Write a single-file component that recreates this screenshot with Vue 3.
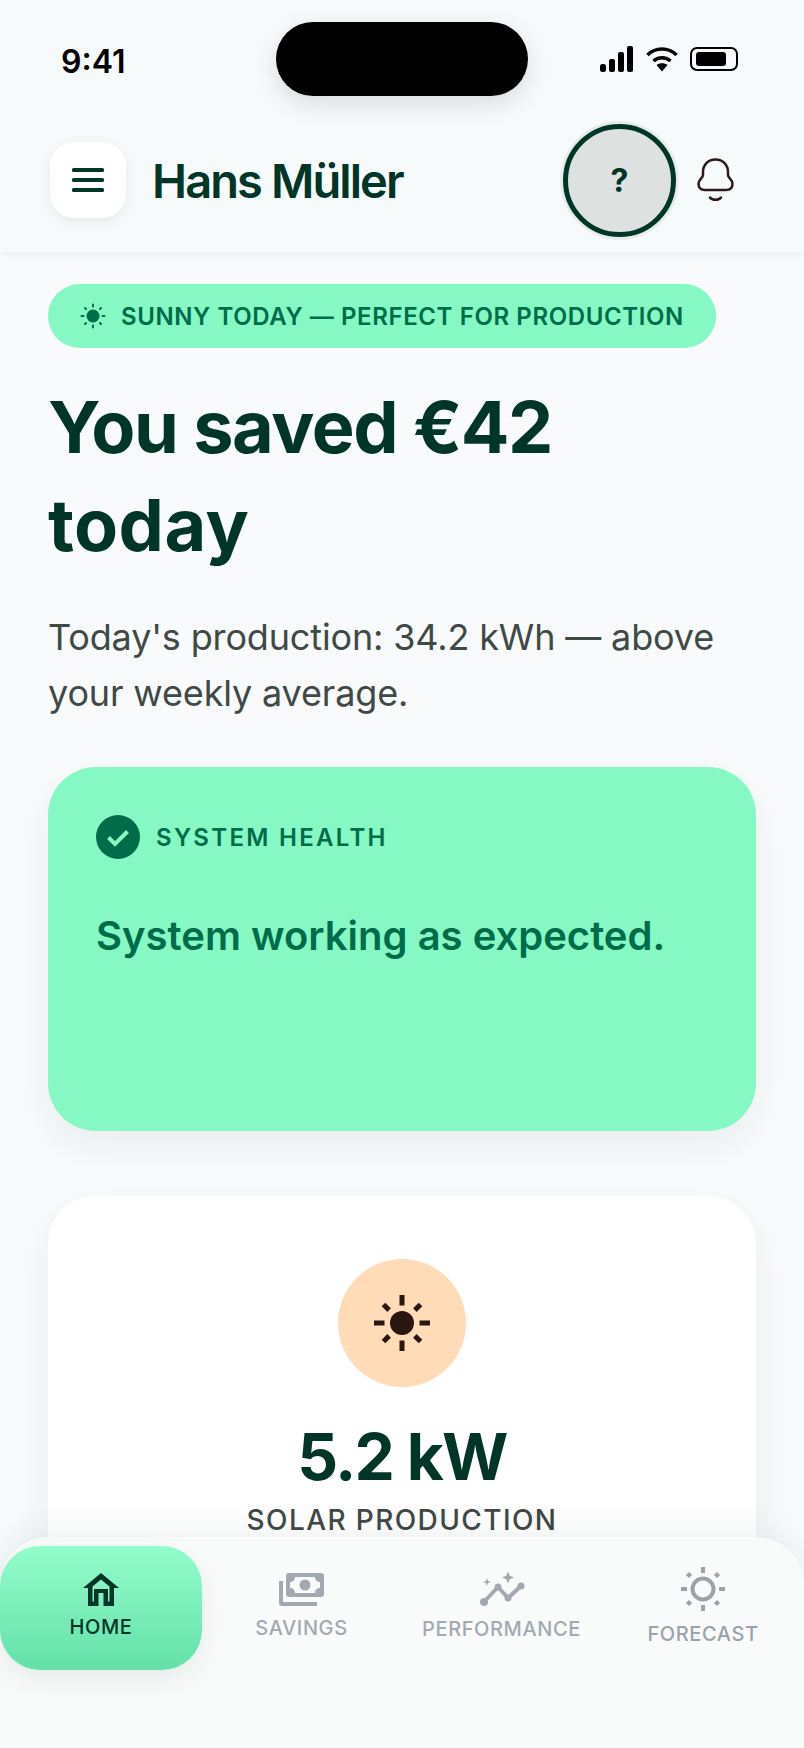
<script setup>
const navItems = [
  { key: 'home', label: 'HOME', active: true },
  { key: 'savings', label: 'SAVINGS' },
  { key: 'performance', label: 'PERFORMANCE' },
  { key: 'forecast', label: 'FORECAST' }
]
</script>

<template>
  <div class="phone">
    <div class="island"></div>

    <header class="topbar">
      <div class="status">
        <span class="time">9:41</span>
        <div class="status-icons">
          <svg width="34" height="26" viewBox="0 0 34 26" fill="#000">
            <rect x="0" y="18" width="6" height="8" rx="2.500" />
            <rect x="9" y="13" width="6" height="13" rx="2" />
            <rect x="18" y="6" width="6" height="20" rx="2" />
            <rect x="27" y="0" width="6" height="26" rx="2" />
          </svg>
          <svg width="32" height="26" viewBox="0 0 32 26" fill="none" stroke="#000" stroke-width="3.500">
            <path d="M1.500 9 C9.500 1 22.500 1 30.500 9" />
            <path d="M7.500 15 C12 10.500 20 10.500 24.500 15" />
            <path d="M10.500 19 L16 25.500 L21.500 19 C18.500 16.500 13.500 16.500 10.500 19Z" fill="#000" stroke="none" />
          </svg>
          <svg width="48" height="24" viewBox="0 0 48 24">
            <rect x="1" y="1" width="46" height="22" rx="6" fill="none" stroke="#000" stroke-width="2" />
            <rect x="6" y="5" width="30" height="14" rx="3" fill="#000" />
          </svg>
        </div>
      </div>

      <div class="appbar">
        <button class="menu-btn">
          <svg width="32" height="24" viewBox="0 0 32 24" fill="#003527">
            <rect x="0" y="0" width="32" height="4" rx="1.500" />
            <rect x="0" y="10" width="32" height="4" rx="1.500" />
            <rect x="0" y="20" width="32" height="4" rx="1.500" />
          </svg>
        </button>
        <div class="name">Hans Müller</div>
        <div class="avatar"><span>?</span></div>
        <svg class="bell" width="38" height="44" viewBox="0 0 38 44" fill="none" stroke="#2a1a1a" stroke-width="2.500">
          <path d="M18.500 1.500 C11 1.500 6 7 6 14 L6 17 C6 20 1.500 21 1.500 26 C1.500 30 4 32 8 32 L29 32 C33 32 35.500 30 35.500 26 C35.500 21 31 20 31 17 L31 14 C31 7 26 1.500 18.500 1.500Z" />
          <path d="M13 39.500 C15 42.500 22 42.500 24 39.500" stroke-linecap="round" />
        </svg>
      </div>
    </header>

    <main class="content">
      <div class="chip">
        <svg width="26" height="26" viewBox="0 0 26 26" fill="#006c4a" stroke="#006c4a" stroke-width="2" stroke-linecap="round">
          <circle cx="13" cy="13" r="6.500" stroke="none" />
          <path d="M13 1.500v2M13 22.500v2M1.500 13h2M22.500 13h2M5 5l1 1M20 20l1 1M5 21l1-1M20 6l1-1" />
        </svg>
        <span>SUNNY TODAY — PERFECT FOR PRODUCTION</span>
      </div>

      <h1 class="headline">You saved €42<br /><span class="headline-second">today</span></h1>
      <p class="sub">Today's production: 34.2 kWh — above your weekly average.</p>

      <section class="health">
        <div class="health-label">
          <svg width="44" height="44" viewBox="0 0 44 44">
            <circle cx="22" cy="22" r="22" fill="#006c4a" />
            <path d="M12.500 22.500 L19 29 L31.500 16.500" fill="none" stroke="#86f8c3" stroke-width="4" />
          </svg>
          <span>SYSTEM HEALTH</span>
        </div>
        <p class="health-text">System working as expected.</p>
      </section>

      <section class="solar">
        <div class="sun-circle">
          <svg width="56" height="56" viewBox="0 0 56 56" fill="#2a1610">
            <circle cx="28" cy="28" r="12" />
            <rect x="25.500" y="0" width="5" height="10.500" />
            <rect x="25.500" y="45.500" width="5" height="10.500" />
            <rect x="0" y="25.500" width="10.500" height="5" />
            <rect x="45.500" y="25.500" width="10.500" height="5" />
            <rect x="9.800" y="8.300" width="5" height="8" transform="rotate(-45 12.300 12.300)" />
            <rect x="41.200" y="8.300" width="5" height="8" transform="rotate(45 43.700 12.300)" />
            <rect x="9.800" y="39.700" width="5" height="8" transform="rotate(45 12.300 43.700)" />
            <rect x="41.200" y="39.700" width="5" height="8" transform="rotate(-45 43.700 43.700)" />
          </svg>
        </div>
        <div class="solar-value">5.2 kW</div>
        <div class="solar-label">SOLAR PRODUCTION</div>
      </section>
    </main>

    <nav class="tabs">
      <div v-for="item in navItems" :key="item.key" :class="['tab', 'tab-' + item.key, { active: item.active }]">
        <svg v-if="item.key === 'home'" width="36" height="34" viewBox="0 0 36 34" fill="#003527">
          <path fill-rule="evenodd" d="M18 0 L36 15 L31 15 L31 33 L20.500 33 L20.500 20 L15.500 20 L15.500 33 L5 33 L5 15 L0 15 Z M18 6.500 L9.500 13.500 L9.500 28.500 L11 28.500 L11 16 L25 16 L25 28.500 L26.500 28.500 L26.500 13.500 Z" />
        </svg>
        <svg v-else-if="item.key === 'savings'" width="45" height="33" viewBox="0 0 45 33" fill="#a3a9b1">
          <path fill-rule="evenodd" d="M10 0 H42 a3 3 0 0 1 3 3 V21 a3 3 0 0 1 -3 3 H10 a3 3 0 0 1 -3 -3 V3 a3 3 0 0 1 3 -3Z M16 4 c0 3 -2 5 -5 5 V15 c3 0 5 2 5 5 H36 c0 -3 2 -5 5 -5 V9 c-3 0 -5 -2 -5 -5Z" />
          <circle cx="26" cy="12" r="5.500" />
          <path d="M0 8 H4 V29 H38 V33 H3 a3 3 0 0 1 -3 -3Z" />
        </svg>
        <svg v-else-if="item.key === 'performance'" width="46" height="36" viewBox="0 0 46 36" fill="#a3a9b1">
          <path d="M5 30 L19 15 L29 26 L42 14" fill="none" stroke="#a3a9b1" stroke-width="4" stroke-linejoin="round" />
          <circle cx="5" cy="30" r="4" />
          <circle cx="19" cy="15" r="3.500" />
          <circle cx="29" cy="26" r="3.500" />
          <circle cx="42" cy="14" r="3.500" />
          <path d="M29 -0.500 L30.800 3.700 L35 5.500 L30.800 7.300 L29 11.500 L27.200 7.300 L23 5.500 L27.200 3.700Z" />
          <path d="M8 6 L9 9 L12 10 L9 11 L8 14 L7 11 L4 10 L7 9Z" />
        </svg>
        <svg v-else width="44" height="44" viewBox="0 0 44 44" fill="none" stroke="#9aa3a9">
          <circle cx="22" cy="22" r="10.500" stroke-width="4" />
          <path d="M22 0v6M22 38v6M0 22h6M38 22h6" stroke-width="4" />
          <path d="M6.500 6.500l3 3M34.500 34.500l3 3M6.500 37.500l3-3M34.500 9.500l3-3" stroke-width="4.500" />
        </svg>
        <span class="tab-label">{{ item.label }}</span>
      </div>
    </nav>
  </div>
</template>

<style scoped>
.phone {
  position: relative;
  width: 804px;
  height: 1748px;
  overflow: hidden;
  background: #f8fafc;
  font-family: Inter, 'Liberation Sans', sans-serif;
  color: #003527;
}
.island {
  position: absolute;
  left: 276px;
  top: 22px;
  width: 252px;
  height: 74px;
  border-radius: 37px;
  background: #000;
  box-shadow: 0 8px 24px rgba(0, 0, 0, 0.12);
  z-index: 5;
}
.topbar {
  height: 252px;
  box-sizing: border-box;
  background: #f7fafb;
  box-shadow: 0 2px 8px rgba(0, 53, 39, 0.06);
}
.status {
  height: 123px;
  box-sizing: border-box;
  padding: 44px 66px 0 61px;
  display: flex;
  justify-content: space-between;
  align-items: flex-start;
}
.time {
  font-size: 32px;
  line-height: 36px;
  font-weight: 600;
  color: #000;
}
.status-icons {
  display: flex;
  align-items: center;
  gap: 12px;
  padding-top: 2px;
}
.appbar {
  height: 114px;
  display: flex;
  align-items: center;
  padding: 0 69px 0 50px;
}
.menu-btn {
  width: 76px;
  height: 76px;
  border: none;
  border-radius: 24px;
  background: #fff;
  display: flex;
  align-items: center;
  justify-content: center;
  box-shadow: 0 4px 12px rgba(0, 53, 39, 0.08);
}
.name {
  margin-left: 26px;
  font-size: 47px;
  font-weight: 600;
  letter-spacing: -1.9px;
  flex: 1;
}
.avatar {
  width: 113px;
  height: 113px;
  box-sizing: border-box;
  border-radius: 50%;
  border: 5px solid #003527;
  background: radial-gradient(circle, #dde1e0 0, #dde1e0 72%, #e6eaea 90%);
  box-shadow: 0 0 0 3px #e6ebeb;
  display: flex;
  align-items: center;
  justify-content: center;
  font-size: 32px;
  font-weight: 700;
}
.bell {
  margin-left: 21px;
}
.content {
  padding: 32px 48px 0;
}
.chip {
  width: 668px;
  height: 64px;
  box-sizing: border-box;
  border-radius: 32px;
  background: #86f8c3;
  color: #006c4a;
  display: flex;
  align-items: center;
  gap: 15px;
  padding-left: 32px;
  font-size: 24px;
  font-weight: 600;
  letter-spacing: 0.6px;
}
.headline {
  margin: 30px 0 0;
  font-size: 72px;
  line-height: 98px;
  font-weight: 700;
  letter-spacing: -1.4px;
}
.headline-second {
  letter-spacing: 0.4px;
}
.sub {
  margin: 35px 0 0;
  font-size: 36px;
  line-height: 56px;
  letter-spacing: -0.15px;
  color: #3f4945;
}
.health {
  margin-top: 46px;
  height: 364px;
  box-sizing: border-box;
  padding: 48px;
  border-radius: 48px;
  background: #86f8c3;
  color: #006c4a;
  box-shadow: 0 16px 40px rgba(0, 53, 39, 0.06);
}
.health-label {
  display: flex;
  align-items: center;
  gap: 16px;
  font-size: 24px;
  font-weight: 600;
  letter-spacing: 2.3px;
}
.health-text {
  margin: 49px 0 0;
  font-size: 40px;
  line-height: 56px;
  font-weight: 600;
}
.solar {
  margin-top: 65px;
  height: 460px;
  box-sizing: border-box;
  padding-top: 63px;
  border-radius: 48px;
  background: #fff;
  box-shadow: 0 16px 40px rgba(0, 53, 39, 0.06);
  display: flex;
  flex-direction: column;
  align-items: center;
}
.sun-circle {
  width: 128px;
  height: 128px;
  border-radius: 50%;
  background: #ffdbb8;
  display: flex;
  align-items: center;
  justify-content: center;
}
.solar-value {
  margin-top: 31px;
  font-size: 64px;
  line-height: 78px;
  font-weight: 700;
  letter-spacing: -1.7px;
}
.solar-label {
  margin-top: 6px;
  font-size: 28px;
  line-height: 36px;
  font-weight: 500;
  letter-spacing: 1.4px;
  color: #3f4945;
}
.tabs {
  position: absolute;
  left: 0;
  right: 0;
  top: 1537px;
  height: 211px;
  box-sizing: border-box;
  padding-top: 9px;
  border-radius: 48px 48px 0 0;
  background: #f9fbfb;
  box-shadow: 0 -10px 30px rgba(0, 53, 39, 0.06);
  display: grid;
  grid-template-columns: 202px 199px 201px 202px;
  align-items: start;
}
.tab {
  display: flex;
  flex-direction: column;
  align-items: center;
  color: #a3a9b1;
  font-size: 20px;
  font-weight: 500;
  letter-spacing: 0.6px;
  padding-top: 27px;
  gap: 8px;
}
.tab.active {
  height: 124px;
  box-sizing: border-box;
  border-radius: 40px;
  background: linear-gradient(180deg, #93fdcc, #64e0a8);
  color: #003527;
  box-shadow: 0 10px 24px rgba(0, 53, 39, 0.08);
}
.tab-savings {
  gap: 10px;
}
.tab-performance {
  padding-top: 26px;
  gap: 9px;
}
.tab-forecast {
  padding-top: 21px;
  gap: 11px;
  color: #9aa3a9;
}
.tab-label {
  line-height: 24px;
}
</style>

<style>
html, body { background: #f8fafc; }
</style>
